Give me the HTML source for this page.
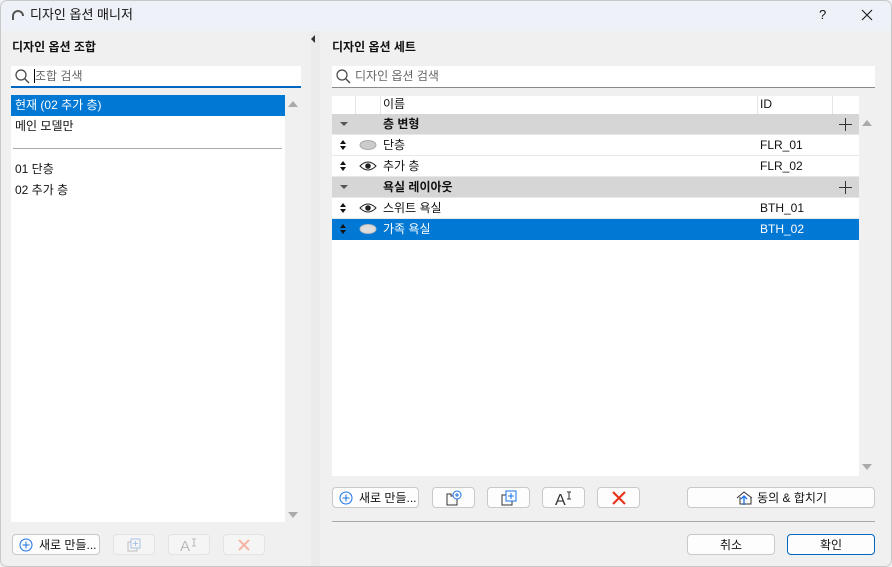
<!DOCTYPE html>
<html><head><meta charset="utf-8"><style>
*{box-sizing:border-box;margin:0;padding:0}
body{width:892px;height:567px;overflow:hidden;font-family:"Liberation Sans","Noto Sans CJK KR",sans-serif;font-size:12px;line-height:14px;color:#111;background:#f0f0f0;position:relative}
.abs{position:absolute}
.win{position:absolute;left:0;top:0;width:892px;height:567px;overflow:hidden;background:#f0f0f0}
.frame{position:absolute;left:0;top:0;width:892px;height:567px;border:1px solid #c8c8c8;border-radius:7px;pointer-events:none}
.title{position:absolute;left:0;top:0;width:892px;height:31px;background:#eef2f8}
.btn{position:absolute;height:21px;border:1px solid #c9c9c9;border-radius:4px;background:#fdfdfd;display:flex;align-items:center;justify-content:center;font-size:12px}
.row{position:absolute;left:332px;width:527px;height:21px;border-bottom:1px solid #e8e8e8;background:#fff}
.grp{background:#d6d6d6}
.sel{background:#0078d4;color:#fff}
.t{position:absolute;top:3px}
.ud{position:absolute;left:8px;top:5px;width:6px;height:11px}
.ud:before{content:"";position:absolute;left:0;top:0;border-left:3px solid transparent;border-right:3px solid transparent;border-bottom:4px solid #111}
.ud:after{content:"";position:absolute;left:0;top:6px;border-left:3px solid transparent;border-right:3px solid transparent;border-top:4px solid #111}
</style></head><body><div class="win">
<div class="title">
 <svg class="abs" style="left:11px;top:9px" width="14" height="12"><path d="M2 11 V7 A5 5 0 0 1 12 7" fill="none" stroke="#555" stroke-width="2"/></svg>
 <div class="abs" style="left:30px;top:8px;font-size:13px">디자인 옵션 매니저</div>
 <div class="abs" style="left:819px;top:8px;font-size:13px">?</div>
 <svg class="abs" style="left:861px;top:9px" width="12" height="12"><path d="M1 1L11 11M11 1L1 11" stroke="#222" stroke-width="1.2"/></svg>
</div>
<div class="abs" style="left:311px;top:31px;width:9px;height:536px;background:#ebebeb"></div>
<div class="abs" style="left:311px;top:35px;width:0;height:0;border-top:4px solid transparent;border-bottom:4px solid transparent;border-right:4px solid #333"></div>
<!-- left -->
<div class="abs" style="left:12px;top:40px;font-weight:bold">디자인 옵션 조합</div>
<div class="abs" style="left:11px;top:66px;width:290px;height:22px;background:#fff;border-bottom:2px solid #0067c0"></div>
<svg class="abs" style="left:15px;top:69px" width="15" height="15"><circle cx="6" cy="6" r="5" fill="none" stroke="#444" stroke-width="1.2"/><path d="M10 10L14 14" stroke="#444" stroke-width="1.3"/></svg>
<div class="abs" style="left:34px;top:69px;width:1px;height:14px;background:#000"></div>
<div class="abs" style="left:35px;top:69px;color:#666">조합 검색</div>
<div class="abs" style="left:11px;top:95px;width:274px;height:427px;background:#fff"></div>
<div class="abs sel" style="left:11px;top:95px;width:274px;height:21px"></div>
<div class="abs" style="left:15px;top:98px;color:#fff">현재 (02 추가 층)</div>
<div class="abs" style="left:15px;top:119px">메인 모델만</div>
<div class="abs" style="left:13px;top:148px;width:269px;height:1px;background:#aaa"></div>
<div class="abs" style="left:15px;top:162px">01 단층</div>
<div class="abs" style="left:15px;top:183px">02 추가 층</div>
<div class="abs" style="left:288px;top:101px;border-left:5px solid transparent;border-right:5px solid transparent;border-bottom:6px solid #aaa"></div>
<div class="abs" style="left:288px;top:512px;border-left:5px solid transparent;border-right:5px solid transparent;border-top:6px solid #aaa"></div>
<div class="btn" style="left:12px;top:534px;width:88px;justify-content:flex-start;padding-left:6px"><svg width="14" height="14"><circle cx="7" cy="7" r="6" fill="none" stroke="#1a73e8"/><path d="M7 3.5V10.5M3.5 7H10.5" stroke="#1a73e8"/></svg><span style="margin-left:6px">새로 만들...</span></div>
<div class="btn" style="left:113px;top:534px;width:42px;background:#f5f5f5;border-color:#e3e3e3"><svg width="14" height="14"><rect x="1" y="4" width="9" height="9" fill="none" stroke="#bbb"/><rect x="4" y="1" width="9" height="9" fill="#f5f5f5" stroke="#a8c4e8"/><path d="M8.5 3V8M6 5.5H11" stroke="#a8c4e8"/></svg></div>
<div class="btn" style="left:168px;top:534px;width:42px;background:#f5f5f5;border-color:#e3e3e3"><svg width="22" height="16"><text x="2" y="14" font-family="Liberation Sans" font-size="15" fill="#bbb">A</text><path d="M14 2H18M16 2V9M14 9H18" stroke="#bbb"/></svg></div>
<div class="btn" style="left:223px;top:534px;width:42px;background:#f5f5f5;border-color:#e3e3e3"><svg width="14" height="14"><path d="M2 2L12 12M12 2L2 12" stroke="#f7b5a6" stroke-width="2"/></svg></div>
<!-- right -->
<div class="abs" style="left:332px;top:40px;font-weight:bold">디자인 옵션 세트</div>
<div class="abs" style="left:332px;top:66px;width:543px;height:22px;background:#fff;border-bottom:1px solid #8a8a8a"></div>
<svg class="abs" style="left:336px;top:69px" width="15" height="15"><circle cx="6" cy="6" r="5" fill="none" stroke="#444" stroke-width="1.2"/><path d="M10 10L14 14" stroke="#444" stroke-width="1.3"/></svg>
<div class="abs" style="left:355px;top:69px;color:#666">디자인 옵션 검색</div>
<div class="abs" style="left:332px;top:96px;width:527px;height:380px;background:#fff"></div>
<div class="abs" style="left:332px;top:96px;width:527px;height:18px;background:#fff">
 <div class="abs" style="left:23px;top:0;width:1px;height:18px;background:#e3e3e3"></div>
 <div class="abs" style="left:48px;top:0;width:1px;height:18px;background:#e3e3e3"></div>
 <div class="abs" style="left:425px;top:0;width:1px;height:18px;background:#e3e3e3"></div>
 <div class="abs" style="left:500px;top:0;width:1px;height:18px;background:#e3e3e3"></div>
 <div class="abs" style="left:51px;top:1px">이름</div>
 <div class="abs" style="left:428px;top:1px">ID</div>
</div>
<div class="row grp" style="top:114px"><div class="abs" style="left:8px;top:8px;border-left:4px solid transparent;border-right:4px solid transparent;border-top:4px solid #555"></div><div class="t" style="left:51px;font-weight:bold">층 변형</div><svg class="abs" style="left:507px;top:4px" width="13" height="13"><path d="M6.5 0V13M0 6.5H13" stroke="#333"/></svg></div>
<div class="row" style="top:135px"><div class="ud"></div><svg class="abs" style="left:27px;top:5px" width="18" height="10"><ellipse cx="9" cy="5" rx="8" ry="4.5" fill="#ccc" stroke="#aaa"/></svg><div class="t" style="left:51px">단층</div><div class="t" style="left:428px">FLR_01</div></div>
<div class="row" style="top:156px"><div class="ud"></div><svg class="abs" style="left:27px;top:4px" width="18" height="12"><path d="M1 6Q9 -2 17 6Q9 14 1 6Z" fill="none" stroke="#222"/><circle cx="9" cy="6" r="2.8" fill="#222"/></svg><div class="t" style="left:51px">추가 층</div><div class="t" style="left:428px">FLR_02</div></div>
<div class="row grp" style="top:177px"><div class="abs" style="left:8px;top:8px;border-left:4px solid transparent;border-right:4px solid transparent;border-top:4px solid #555"></div><div class="t" style="left:51px;font-weight:bold">욕실 레이아웃</div><svg class="abs" style="left:507px;top:4px" width="13" height="13"><path d="M6.5 0V13M0 6.5H13" stroke="#333"/></svg></div>
<div class="row" style="top:198px"><div class="ud"></div><svg class="abs" style="left:27px;top:4px" width="18" height="12"><path d="M1 6Q9 -2 17 6Q9 14 1 6Z" fill="none" stroke="#222"/><circle cx="9" cy="6" r="2.8" fill="#222"/></svg><div class="t" style="left:51px">스위트 욕실</div><div class="t" style="left:428px">BTH_01</div></div>
<div class="row sel" style="top:219px;border:none"><div class="ud"></div><svg class="abs" style="left:27px;top:5px" width="18" height="10"><ellipse cx="9" cy="5" rx="8" ry="4.5" fill="#ddd" stroke="#bbb"/></svg><div class="t" style="left:51px">가족 욕실</div><div class="t" style="left:428px">BTH_02</div></div>
<div class="abs" style="left:862px;top:120px;border-left:5px solid transparent;border-right:5px solid transparent;border-bottom:6px solid #aaa"></div>
<div class="abs" style="left:862px;top:464px;border-left:5px solid transparent;border-right:5px solid transparent;border-top:6px solid #aaa"></div>
<div class="btn" style="left:332px;top:487px;width:87px;justify-content:flex-start;padding-left:6px"><svg width="14" height="14"><circle cx="7" cy="7" r="6" fill="none" stroke="#1a73e8"/><path d="M7 3.5V10.5M3.5 7H10.5" stroke="#1a73e8"/></svg><span style="margin-left:6px">새로 만들...</span></div>
<div class="btn" style="left:432px;top:487px;width:43px"><svg width="18" height="16"><path d="M2 4H6V6H12V15H2Z" fill="none" stroke="#333"/><circle cx="12" cy="5" r="4" fill="#fff" stroke="#1a73e8"/><path d="M12 3V7M10 5H14" stroke="#1a73e8"/></svg></div>
<div class="btn" style="left:487px;top:487px;width:43px"><svg width="16" height="16"><rect x="1" y="5" width="10" height="10" fill="none" stroke="#333"/><rect x="5" y="1" width="10" height="10" fill="#fff" stroke="#1a73e8"/><path d="M10 3V9M7 6H13" stroke="#1a73e8"/></svg></div>
<div class="btn" style="left:542px;top:487px;width:43px"><svg width="22" height="16"><text x="2" y="15" font-family="Liberation Sans" font-size="16" fill="#333">A</text><path d="M14 2H18M16 2V9M14 9H18" stroke="#333"/></svg></div>
<div class="btn" style="left:597px;top:487px;width:43px"><svg width="16" height="16"><path d="M2 2L14 14M14 2L2 14" stroke="#e8341c" stroke-width="2.2"/></svg></div>
<div class="btn" style="left:687px;top:487px;width:188px"><svg width="20" height="16" style="margin-right:2px"><path d="M2 8L9 2L17 8M5 7V14H16V7" fill="none" stroke="#333"/><path d="M9 15V6M6 9L9 6L12 9" fill="none" stroke="#1a73e8" stroke-width="1.3"/></svg>동의 &amp; 합치기</div>
<div class="abs" style="left:332px;top:521px;width:543px;height:1px;background:#a8a8a8"></div>
<div class="btn" style="left:687px;top:534px;width:88px">취소</div>
<div class="btn" style="left:787px;top:534px;width:88px;border-color:#0067c0">확인</div>
<div class="frame"></div>
</div></body></html>
